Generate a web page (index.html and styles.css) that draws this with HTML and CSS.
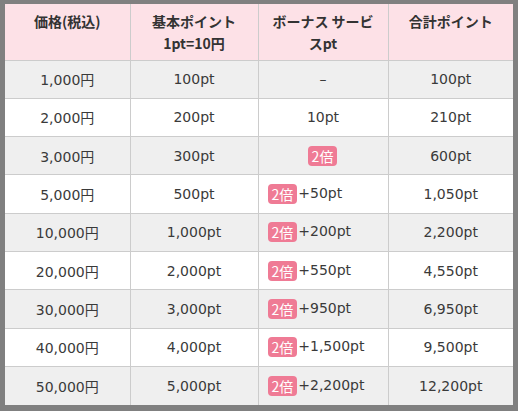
FILE: index.html
```html
<!DOCTYPE html>
<html lang="ja">
<head>
<meta charset="utf-8">
<link rel="stylesheet" href="styles.css">
</head>
<body>
<div class="frame">
<table class="price-table">
  <colgroup>
    <col class="c1"><col class="c2"><col class="c3"><col class="c4">
  </colgroup>
  <thead>
    <tr>
      <th>価格(税込)</th>
      <th>基本ポイント<br>1pt=10円</th>
      <th>ボーナス サービ<br>スpt</th>
      <th>合計ポイント</th>
    </tr>
  </thead>
  <tbody>
    <tr><td>1,000円</td><td>100pt</td><td>–</td><td>100pt</td></tr>
    <tr><td>2,000円</td><td>200pt</td><td>10pt</td><td>210pt</td></tr>
    <tr><td>3,000円</td><td>300pt</td><td><span class="badge">2倍</span></td><td>600pt</td></tr>
    <tr><td>5,000円</td><td>500pt</td><td class="bonus"><span class="badge">2倍</span>+50pt</td><td>1,050pt</td></tr>
    <tr><td>10,000円</td><td>1,000pt</td><td class="bonus"><span class="badge">2倍</span>+200pt</td><td>2,200pt</td></tr>
    <tr><td>20,000円</td><td>2,000pt</td><td class="bonus"><span class="badge">2倍</span>+550pt</td><td>4,550pt</td></tr>
    <tr><td>30,000円</td><td>3,000pt</td><td class="bonus"><span class="badge">2倍</span>+950pt</td><td>6,950pt</td></tr>
    <tr><td>40,000円</td><td>4,000pt</td><td class="bonus"><span class="badge">2倍</span>+1,500pt</td><td>9,500pt</td></tr>
    <tr><td>50,000円</td><td>5,000pt</td><td class="bonus"><span class="badge">2倍</span>+2,200pt</td><td>12,200pt</td></tr>
  </tbody>
</table>
</div>
</body>
</html>
```

FILE: styles.css
```css
html, body {
  margin: 0;
  padding: 0;
  background: #808080;
}
.frame {
  padding: 4px 5px 5px 5px;
}
.price-table {
  width: 508px;
  border-collapse: collapse;
  table-layout: fixed;
  font-family: "DejaVu Sans", "Noto Sans CJK JP", sans-serif;
  font-size: 14px;
  color: #3a3a3a;
}
.c1 { width: 125px; }
.c2 { width: 128px; }
.c3 { width: 130px; }
.c4 { width: 125px; }
.price-table th,
.price-table td {
  border: 1px solid #cccccc;
  text-align: center;
}
.price-table tr:first-child th { border-top: none; }
.price-table th:first-child, .price-table td:first-child { border-left: none; }
.price-table th:last-child, .price-table td:last-child { border-right: none; }
.price-table tbody tr:last-child td { border-bottom: none; }
.price-table th {
  background: #fde1e7;
  font-family: "Noto Sans CJK JP", sans-serif;
  font-weight: bold;
  font-size: 14px;
  line-height: 22px;
  vertical-align: top;
  height: 56px;
  padding: 6px 4px 0 4px;
  box-sizing: border-box;
  color: #333;
}
.price-table td {
  height: 38.3px;
  padding: 0 4px;
  box-sizing: border-box;
  vertical-align: middle;
}
.price-table tbody tr:nth-child(odd) td { background: #efefef; }
.price-table tbody tr:nth-child(even) td { background: #ffffff; }
.price-table td.bonus {
  text-align: left;
  padding-left: 9px;
}
.badge {
  display: inline-block;
  background: #ef7b95;
  color: #fff;
  border-radius: 4px;
  font-family: "Noto Sans CJK JP", sans-serif;
  font-size: 14px;
  line-height: 20px;
  padding: 0 4px;
  margin-right: 1px;
  vertical-align: middle;
}
```
